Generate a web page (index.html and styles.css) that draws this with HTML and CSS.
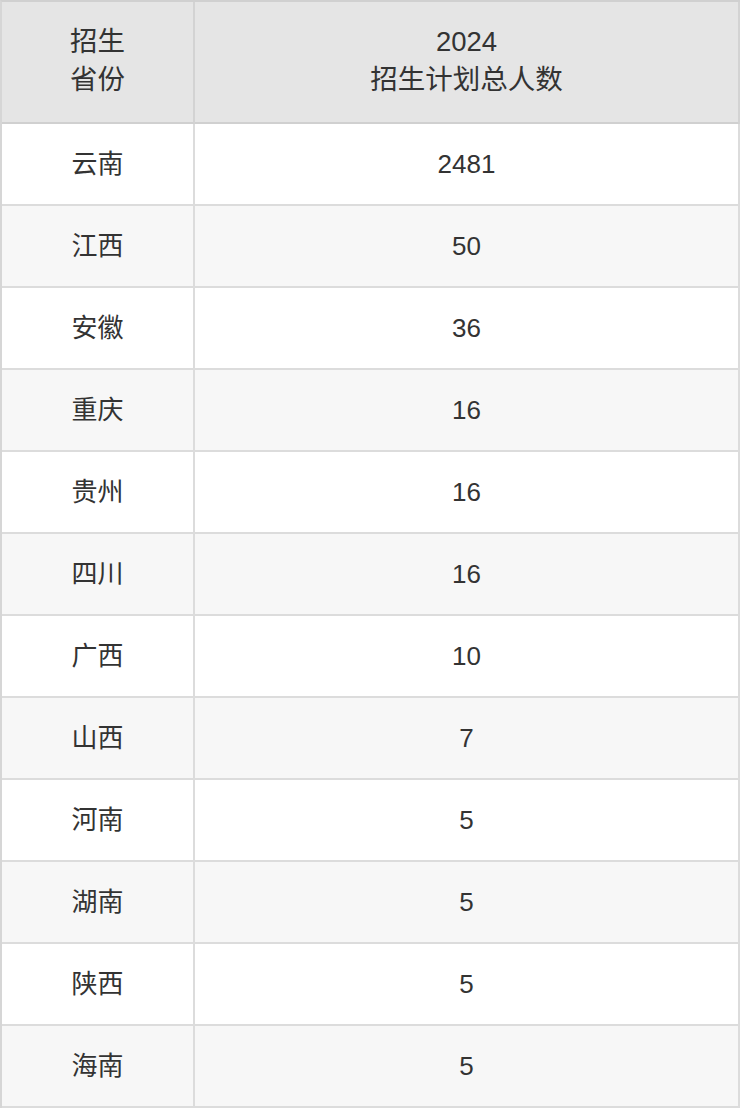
FILE: index.html
```html
<!DOCTYPE html>
<html lang="zh-CN">
<head>
<meta charset="utf-8">
<link rel="stylesheet" href="styles.css">
</head>
<body>
<table class="plan">
  <thead>
    <tr><th class="c1">招生<br>省份</th><th class="c2">2024<br>招生计划总人数</th></tr>
  </thead>
  <tbody>
    <tr><td>云南</td><td>2481</td></tr>
    <tr><td>江西</td><td>50</td></tr>
    <tr><td>安徽</td><td>36</td></tr>
    <tr><td>重庆</td><td>16</td></tr>
    <tr><td>贵州</td><td>16</td></tr>
    <tr><td>四川</td><td>16</td></tr>
    <tr><td>广西</td><td>10</td></tr>
    <tr><td>山西</td><td>7</td></tr>
    <tr><td>河南</td><td>5</td></tr>
    <tr><td>湖南</td><td>5</td></tr>
    <tr><td>陕西</td><td>5</td></tr>
    <tr><td>海南</td><td>5</td></tr>
  </tbody>
</table>
</body>
</html>
```
FILE: styles.css
```css
html, body {
  margin: 0;
  padding: 0;
  background: #fff;
}
.plan {
  width: 740px;
  table-layout: fixed;
  border-collapse: separate;
  border-spacing: 0;
  border-top: 2px solid #d0d0d0;
  border-left: 2px solid #d6d6d6;
  font-family: "Liberation Sans", "Noto Sans CJK SC", sans-serif;
  font-size: 26px;
  line-height: 39px;
  color: #333;
}
.plan th, .plan td {
  box-sizing: border-box;
  padding: 0;
  text-align: center;
  vertical-align: middle;
  font-weight: normal;
  border-right: 2px solid #dcdcdc;
  border-bottom: 2px solid #dcdcdc;
}
.plan th {
  background: #e5e5e5;
  height: 122px;
  font-size: 27.5px;
  line-height: 38px;
  padding-bottom: 2px;
  border-bottom-color: #d0d0d0;
  border-right-color: #d3d3d3;
}
.plan th.c1 { width: 193px; }
.plan td { height: 82px; }
.plan tbody tr:nth-child(even) td { background: #f7f7f7; }
```
